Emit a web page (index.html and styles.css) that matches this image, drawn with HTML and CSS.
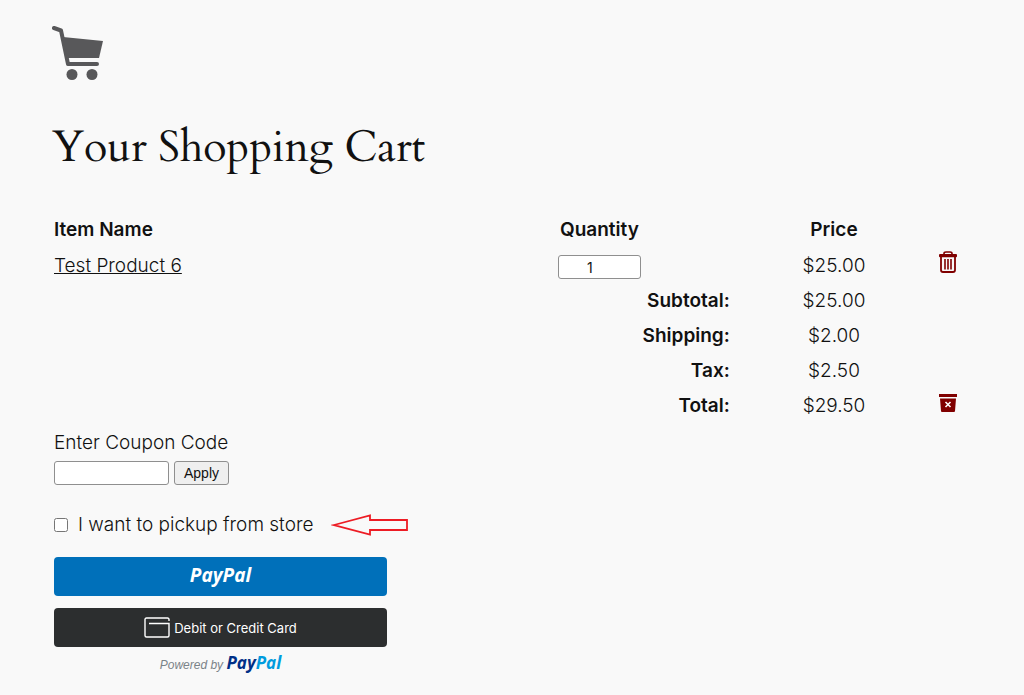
FILE: index.html
```html
<!DOCTYPE html>
<html lang="en">
<head>
    <meta charset="UTF-8">
    <meta name="viewport" content="width=device-width, initial-scale=1.0">
    <title>Your Shopping Cart</title>
    <link rel="stylesheet" href="styles.css">
</head>
<body>

<main class="cart">
    <svg class="cart-icon" viewBox="0 0 54 56" aria-hidden="true">
        <path d="M2 3 L9 5.500 L16 39 H45" fill="none" stroke="#58585a" stroke-width="4" stroke-linecap="round" stroke-linejoin="round"/>
        <path d="M11 12 L51 16 L47 33 H15 Z" fill="#58585a"/>
        <circle cx="20" cy="49.500" r="5.500" fill="#58585a"/>
        <circle cx="40" cy="49.500" r="5.500" fill="#58585a"/>
    </svg>

    <h1>Your Shopping Cart</h1>

    <table class="cart-table">
        <thead>
            <tr>
                <th class="item">Item Name</th>
                <th class="qty">Quantity</th>
                <th class="price">Price</th>
                <td class="action"></td>
            </tr>
        </thead>
        <tbody>
            <tr class="product">
                <td><a href="#">Test Product 6</a></td>
                <td class="qty-cell"><input type="text" class="qty-input" value="1" aria-label="Quantity"></td>
                <td class="price">$25.00</td>
                <td class="action">
                    <button type="button" class="icon-button" aria-label="Remove item">
                        <svg width="18" height="22" viewBox="0 0 18 22">
                            <path d="M5 3.500 V2.500 Q5 1 7 1 H11 Q13 1 13 2.500 V3.500" fill="none" stroke="#800000" stroke-width="1.600"/>
                            <rect x="0" y="3" width="18" height="3.200" rx="1" fill="#800000"/>
                            <path d="M2 6 V19 Q2 21 4 21 H14 Q16 21 16 19 V6" fill="none" stroke="#800000" stroke-width="1.800"/>
                            <path d="M6 8 V18.500 M9 8 V18.500 M12 8 V18.500" stroke="#800000" stroke-width="1.600"/>
                        </svg>
                    </button>
                </td>
            </tr>
            <tr>
                <th colspan="2" class="label">Subtotal:</th>
                <td class="price">$25.00</td>
                <td></td>
            </tr>
            <tr>
                <th colspan="2" class="label">Shipping:</th>
                <td class="price">$2.00</td>
                <td></td>
            </tr>
            <tr>
                <th colspan="2" class="label">Tax:</th>
                <td class="price">$2.50</td>
                <td></td>
            </tr>
            <tr>
                <th colspan="2" class="label">Total:</th>
                <td class="price">$29.50</td>
                <td class="action">
                    <button type="button" class="icon-button" aria-label="Empty cart">
                        <svg width="18" height="18" viewBox="0 0 18 18">
                            <rect width="18" height="3" fill="#800000"/>
                            <path d="M1 4.500 H17 L16 17 Q16 18 15 18 H3 Q2 18 2 17 Z" fill="#800000"/>
                            <path d="M6.500 8 L11.500 13 M11.500 8 L6.500 13" stroke="#fff" stroke-width="1.600"/>
                        </svg>
                    </button>
                </td>
            </tr>
        </tbody>
    </table>

    <form class="coupon">
        <label for="coupon">Enter Coupon Code</label>
        <div class="coupon-row">
            <input type="text" id="coupon">
            <button type="button">Apply</button>
        </div>
    </form>

    <div class="pickup">
        <input type="checkbox" id="pickup">
        <label for="pickup">I want to pickup from store</label>
        <svg class="arrow" width="78" height="22" viewBox="0 0 78 22" aria-hidden="true">
            <path d="M3 11 L39 1.500 V6 H76 V16 H39 V20.500 Z" fill="none" stroke="#ed1c24" stroke-width="1.800"/>
        </svg>
    </div>

    <div class="payment">
        <button type="button" class="pay-button paypal" aria-label="PayPal"><span class="brand">PayPal</span></button>
        <button type="button" class="pay-button card">
            <svg width="26" height="21" viewBox="0 0 26 21" aria-hidden="true">
                <path d="M25 4 V2.500 Q25 1 23.500 1 H2.500 Q1 1 1 2.500 V18.500 Q1 20 2.500 20 H23.500 Q25 20 25 18.500 V6.500 H5" fill="none" stroke="#fff" stroke-width="1.400"/>
            </svg>
            <span>Debit or Credit Card</span>
        </button>
        <p class="powered">Powered by <span class="brand"><span class="pay">Pay</span><span class="pal">Pal</span></span></p>
    </div>
</main>

</body>
</html>
```

FILE: styles.css
```css
* {
    box-sizing: border-box;
}
body {
    margin: 0;
    background-color: #f9f9f9;
    color: #111;
    font-family: Inter, sans-serif;
    font-size: 19px;
    font-weight: 300;
    line-height: 31px;
}
.cart {
    padding: 25px 52px 20px;
}
.cart-icon {
    display: block;
    width: 54px;
    height: 56px;
}
h1 {
    margin: 36px 0 33px;
    font-family: Cardo, "Liberation Serif", serif;
    font-size: 43px;
    font-weight: 400;
    line-height: 62px;
}
.cart-table {
    width: 100%;
    table-layout: fixed;
    border-collapse: separate;
    border-spacing: 0;
}
.cart-table th, .cart-table td {
    height: 35px;
    padding: 2px;
    text-align: left;
}
.cart-table .product td {
    height: 36px;
}
.cart-table th {
    font-weight: 600;
}
.cart-table .item {
    width: 55%;
}
.cart-table .qty {
    width: 19%;
}
.cart-table .price {
    width: 22%;
    text-align: center;
}
.cart-table .label {
    padding-right: 3px;
    text-align: right;
}
.cart-table .qty-cell {
    padding: 4px 0 0;
}
.cart-table .action {
    padding: 0 0 6px 4px;
}
a {
    color: inherit;
    text-decoration-thickness: 1px;
}
input[type="text"] {
    display: block;
    height: 24px;
    border: 1px solid #8f8f8f;
    border-radius: 3px;
    background: white;
    color: #111;
    font-family: Inter, sans-serif;
    font-size: 14px;
}
.cart-table .qty-input {
    width: 83px;
    padding: 0 28px;
}
.icon-button {
    display: block;
    padding: 0;
    border: none;
    background: none;
    cursor: pointer;
}
.icon-button svg {
    display: block;
}
.coupon {
    margin-top: 4px;
    padding-left: 2px;
}
.coupon label {
    display: block;
}
.coupon-row {
    display: flex;
    gap: 5px;
    margin-top: 3px;
}
.coupon-row input {
    width: 115px;
}
.coupon-row button {
    height: 24px;
    padding: 0 9px;
    border: 1px solid #8f8f8f;
    border-radius: 3px;
    background: #efefef;
    color: #111;
    font-family: "Liberation Sans", Arial, sans-serif;
    font-size: 14px;
}
.pickup {
    display: flex;
    align-items: center;
    margin-top: 24px;
    padding-left: 2px;
}
.pickup input {
    width: 14px;
    height: 14px;
    margin: 0 10px 0 0;
}
.arrow {
    margin-left: 18px;
}
.payment {
    width: 333px;
    margin: 17px 0 0 2px;
}
.pay-button {
    display: flex;
    align-items: center;
    justify-content: center;
    gap: 4px;
    width: 100%;
    height: 39px;
    margin-bottom: 12px;
    border: none;
    border-radius: 4px;
    color: white;
    font-family: Inter, sans-serif;
    font-size: 13px;
    cursor: pointer;
}
.paypal {
    padding-bottom: 4px;
    background: #0070ba;
}
.card {
    background: #2c2e2f;
}
.brand {
    font-family: "Open Sans", sans-serif;
    font-size: 19px;
    font-style: italic;
    font-weight: 700;
}
.powered {
    margin: -6px 0 0;
    color: #7b8388;
    font-family: "Liberation Sans", Arial, sans-serif;
    font-size: 12px;
    font-style: italic;
    line-height: 20px;
    text-align: center;
}
.powered .brand {
    font-size: 17px;
}
.pay {
    color: #003087;
}
.pal {
    color: #009cde;
}
```
